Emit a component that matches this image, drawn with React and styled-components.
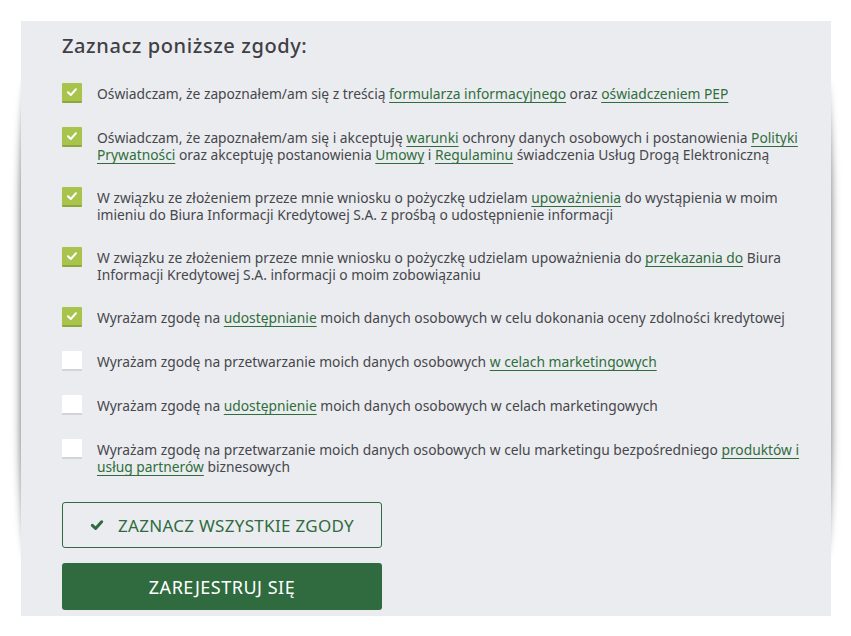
import React, {useState} from 'react';
import styled, {createGlobalStyle} from 'styled-components';

const GlobalStyle = createGlobalStyle`
	body {
		margin: 0;
		background: #fff;
		font-family: "Noto Sans", "Open Sans", sans-serif;
	}
`;

const Page = styled.div`
	padding: 21px 20px 20px 21px;
`;

const Panel = styled.div`
	position: relative;
	width: 810px;
	box-sizing: border-box;
	background: #ebecf0;
	padding: 12px 22px 6px 41px;

	&::before {
		content: '';
		position: absolute;
		top: 10%;
		bottom: 10%;
		left: 2px;
		right: 2px;
		z-index: -1;
		border-radius: 8px / 140px;
		box-shadow: 0 0 10px 2px rgba(0, 0, 0, 0.6);
	}
`;

const Heading = styled.h2`
	margin: 0 0 24px;
	font-size: 20px;
	font-weight: 500;
	color: #3f4045;
	line-height: 26px;
	letter-spacing: 0.6px;
`;

const List = styled.ul`
	list-style: none;
	margin: 0;
	padding: 0;
	display: flex;
	flex-direction: column;
	gap: 24px;
`;

const Row = styled.li`
	display: flex;
	align-items: flex-start;
	gap: 15px;
`;

const Box = styled.span`
	flex: 0 0 20px;
	width: 20px;
	height: 18px;
	display: flex;
	align-items: center;
	justify-content: center;
	background: ${p => (p.checked ? '#a9c44c' : '#fff')};
	border-bottom: 2px solid ${p => (p.checked ? '#8ea63b' : '#d3d4d7')};
	border-radius: 1px;
	cursor: pointer;
`;

const Label = styled.div`
	padding-top: 2px;
	font-size: 13.8px;
	line-height: 17px;
	color: #46474b;
`;

const Link = styled.a`
	color: #2f6e3c;
	text-decoration: underline;
	text-decoration-thickness: 1px;
	text-underline-offset: 3px;
	cursor: pointer;
`;

const Buttons = styled.div`
	display: flex;
	flex-direction: column;
	gap: 15px;
	width: 320px;
	margin-top: 27px;
`;

const OutlineButton = styled.button`
	height: 46px;
	display: flex;
	align-items: center;
	justify-content: center;
	gap: 14px;
	background: transparent;
	border: 1px solid #2f6b3f;
	border-radius: 3px;
	color: #2f6b3f;
	font-family: inherit;
	font-size: 17px;
	font-weight: 400;
	letter-spacing: 0.3px;
	cursor: pointer;
`;

const SolidButton = styled.button`
	height: 47px;
	background: #2f6b3f;
	border: none;
	border-radius: 3px;
	color: #fff;
	font-family: inherit;
	font-size: 18px;
	font-weight: 400;
	letter-spacing: 0.5px;
	cursor: pointer;
`;

const Tick = ({size = 12, color = '#fff', weight = 2}) => (
	<svg width={size} height={size} viewBox="0 0 12 12">
		<path d="M2 6.3 L4.8 9 L10 3.2" fill="none" stroke={color} strokeWidth={weight} strokeLinecap="round" strokeLinejoin="round" />
	</svg>
);

const consents = [
	{checked: true, text: <>Oświadczam, że zapoznałem/am się z treścią <Link>formularza informacyjnego</Link> oraz <Link>oświadczeniem PEP</Link></>},
	{checked: true, text: <>Oświadczam, że zapoznałem/am się i akceptuję <Link>warunki</Link> ochrony danych osobowych i postanowienia <Link>Polityki Prywatności</Link> oraz akceptuję postanowienia <Link>Umowy</Link> i <Link>Regulaminu</Link> świadczenia Usług Drogą Elektroniczną</>},
	{checked: true, text: <>W związku ze złożeniem przeze mnie wniosku o pożyczkę udzielam <Link>upoważnienia</Link> do wystąpienia w moim imieniu do Biura Informacji Kredytowej S.A. z prośbą o udostępnienie informacji</>},
	{checked: true, text: <>W związku ze złożeniem przeze mnie wniosku o pożyczkę udzielam upoważnienia do <Link>przekazania do</Link> Biura Informacji Kredytowej S.A. informacji o moim zobowiązaniu</>},
	{checked: true, text: <>Wyrażam zgodę na <Link>udostępnianie</Link> moich danych osobowych w celu dokonania oceny zdolności kredytowej</>},
	{checked: false, text: <>Wyrażam zgodę na przetwarzanie moich danych osobowych <Link>w celach marketingowych</Link></>},
	{checked: false, text: <>Wyrażam zgodę na <Link>udostępnienie</Link> moich danych osobowych w celach marketingowych</>},
	{checked: false, text: <>Wyrażam zgodę na przetwarzanie moich danych osobowych w celu marketingu bezpośredniego <Link>produktów i usług partnerów</Link> biznesowych</>}
];

export default function App() {
	const [checked, setChecked] = useState(consents.map(c => c.checked));

	const toggle = (index) => {
		setChecked(checked.map((v, i) => (i === index ? !v : v)));
	};

	return (
		<Page>
			<GlobalStyle />
			<Panel>
				<Heading>Zaznacz poniższe zgody:</Heading>
				<List>
					{consents.map((item, index) => (
						<Row key={index}>
							<Box checked={checked[index]} onClick={() => toggle(index)}>
								{checked[index] && <Tick />}
							</Box>
							<Label>{item.text}</Label>
						</Row>
					))}
				</List>
				<Buttons>
					<OutlineButton onClick={() => setChecked(checked.map(() => true))}>
						<Tick size={14} color="#2f6b3f" weight={2.6} />
						ZAZNACZ WSZYSTKIE ZGODY
					</OutlineButton>
					<SolidButton>ZAREJESTRUJ SIĘ</SolidButton>
				</Buttons>
			</Panel>
		</Page>
	);
}
